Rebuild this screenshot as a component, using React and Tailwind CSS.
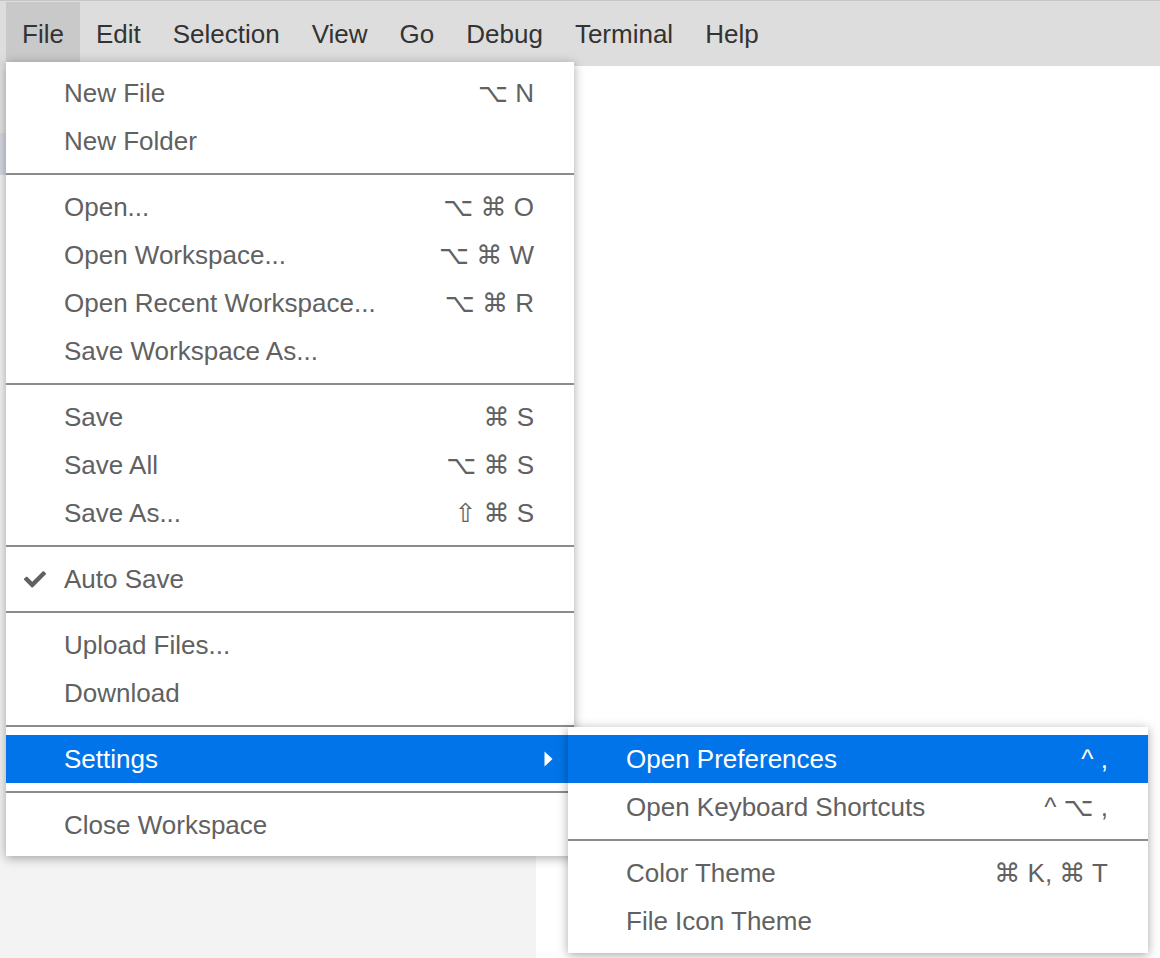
import React from "react";

const FONT = "font-['Liberation_Sans','Helvetica','DejaVu_Sans',sans-serif]";

function Check() {
  return (
    <svg width="22" height="18" viewBox="0 0 512 400" className="absolute left-[18px] top-1/2 -translate-y-1/2">
      <path
        fill="#616161"
        d="M173.9 391.4L7.5 225c-10-10-10-26.2 0-36.2l36.2-36.2c10-10 26.2-10 36.2 0L192 264.7 432.1 24.6c10-10 26.2-10 36.2 0l36.2 36.2c10 10 10 26.2 0 36.2L210.1 391.4c-10 10-26.2 10-36.2 0z"
      />
    </svg>
  );
}

function Arrow() {
  return (
    <svg width="9" height="16" viewBox="0 0 9 16" className="absolute right-[21px] top-1/2 -translate-y-1/2">
      <path d="M0.5 0.5 L8.5 8 L0.5 15.5 Z" fill="#ffffff" />
    </svg>
  );
}

function Item({ label, shortcut, active, checked, submenu }) {
  return (
    <div
      className={
        "relative flex h-[48px] items-center pl-[58px] pr-[40px] text-[26px] leading-none " +
        (active ? "bg-[#0074e8] text-white" : "text-[#616161]")
      }
    >
      {checked && <Check />}
      <span className="flex-1 whitespace-nowrap">{label}</span>
      {shortcut && <span className="whitespace-nowrap">{shortcut}</span>}
      {submenu && <Arrow />}
    </div>
  );
}

function Sep() {
  return <div className="my-[8px] h-[2px] bg-[#8c8c8c]" />;
}

const topItems = ["File", "Edit", "Selection", "View", "Go", "Debug", "Terminal", "Help"];

export default function App() {
  return (
    <div className={"relative h-[958px] w-[1160px] overflow-hidden bg-white " + FONT}>
      {/* Menubar */}
      <div className="flex h-[66px] border-t border-[#c6c6c6] bg-[#dddddd] pl-[6px] pt-[1px]">
        {topItems.map((t, i) => (
          <div
            key={t}
            className={
              "flex h-[61px] items-center px-[16px] pt-[2px] text-[26px] leading-none text-[#333333] " +
              (i === 0 ? "bg-[#c9c9c9]" : "")
            }
          >
            {t}
          </div>
        ))}
      </div>

      {/* Workbench */}
      <div className="flex h-[892px]">
        <div className="flex w-[536px] flex-col bg-[#f3f3f3]">
          <div className="h-[67px] bg-[#e2e2e2]" />
          <div className="h-[42px] bg-[#d6d8e1]" />
          <div className="flex-1" />
        </div>
        <div className="flex-1 bg-white" />
      </div>

      {/* File menu */}
      <div className="absolute left-[6px] top-[62px] w-[568px] bg-white py-[7px] shadow-[0_2px_10px_rgba(0,0,0,0.35)]">
        <Item label="New File" shortcut="⌥ N" />
        <Item label="New Folder" />
        <Sep />
        <Item label="Open..." shortcut="⌥ ⌘ O" />
        <Item label="Open Workspace..." shortcut="⌥ ⌘ W" />
        <Item label="Open Recent Workspace..." shortcut="⌥ ⌘ R" />
        <Item label="Save Workspace As..." />
        <Sep />
        <Item label="Save" shortcut="⌘ S" />
        <Item label="Save All" shortcut="⌥ ⌘ S" />
        <Item label="Save As..." shortcut="⇧ ⌘ S" />
        <Sep />
        <Item label="Auto Save" checked />
        <Sep />
        <Item label="Upload Files..." />
        <Item label="Download" />
        <Sep />
        <Item label="Settings" active submenu />
        <Sep />
        <Item label="Close Workspace" />
      </div>

      {/* Settings submenu */}
      <div className="absolute left-[568px] top-[727px] w-[580px] bg-white py-[8px] shadow-[0_2px_10px_rgba(0,0,0,0.35)]">
        <Item label="Open Preferences" shortcut="^ ," active />
        <Item label="Open Keyboard Shortcuts" shortcut="^ ⌥ ," />
        <Sep />
        <Item label="Color Theme" shortcut="⌘ K, ⌘ T" />
        <Item label="File Icon Theme" />
      </div>
    </div>
  );
}
